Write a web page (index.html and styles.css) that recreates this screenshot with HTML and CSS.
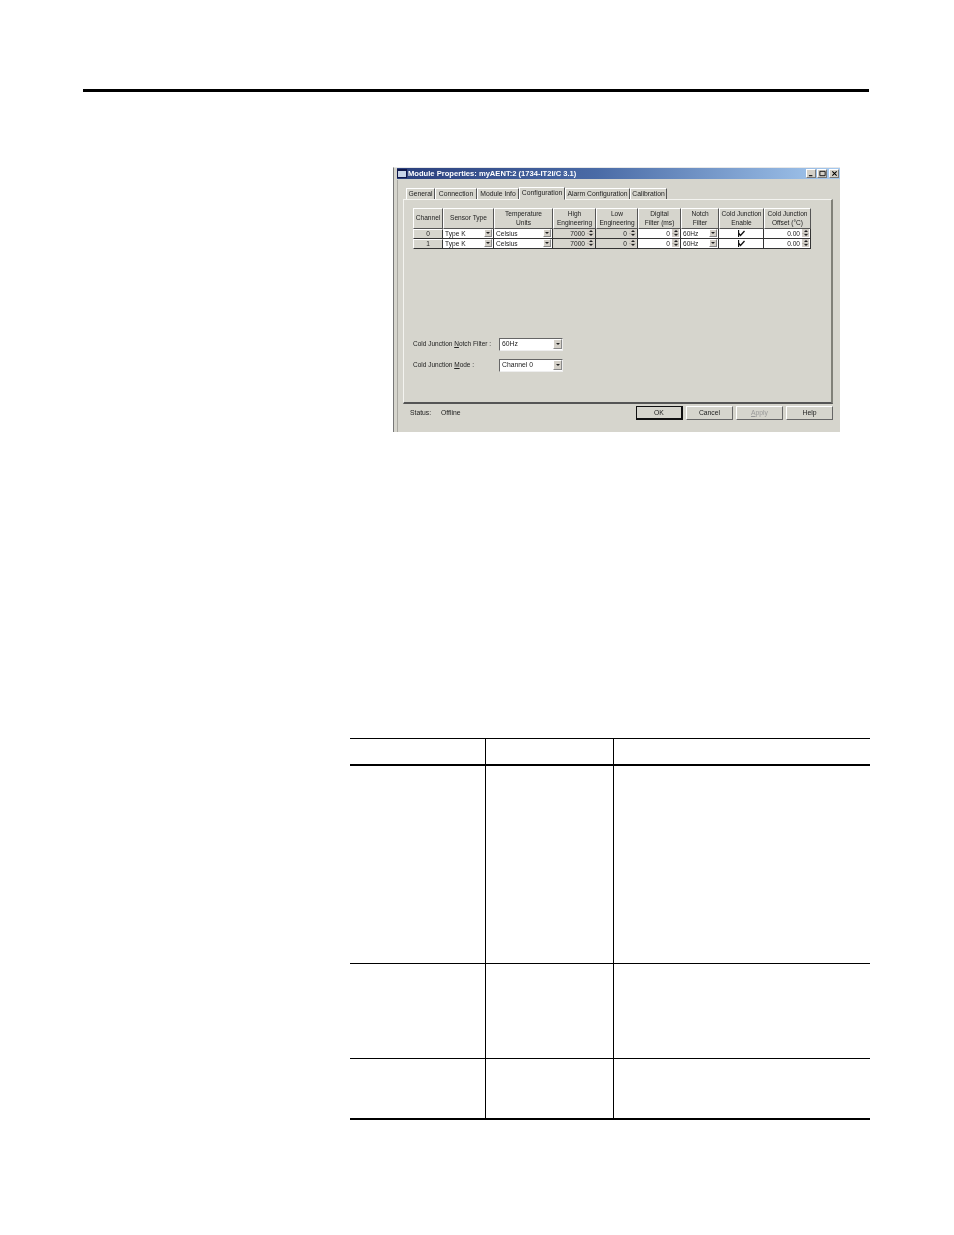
FILE: index.html
```html
<!DOCTYPE html>
<html lang="en">
<head>
<meta charset="utf-8">
<title>Module Properties</title>
<link rel="stylesheet" href="styles.css">
</head>
<body>
<div class="page">
  <div class="top-rule"></div>
  <section class="dialog">
    <header class="titlebar">
      <svg class="app-icon" width="10" height="9" viewBox="0 0 10 9"><rect width="10" height="9" fill="#10184a"/><rect x="1" y="2" width="8" height="6" fill="#c8d4e8"/></svg>
      <span class="title">Module Properties: myAENT:2 (1734-IT2I/C 3.1)</span>
      <div class="win-btns">
        <span class="win-btn"><svg width="8" height="8" viewBox="0 0 8 8"><path d="M1 6.5h4" stroke="#000" stroke-width="1.2"/></svg></span>
        <span class="win-btn"><svg width="8" height="8" viewBox="0 0 8 8"><path d="M1 1.5h6v5h-6z" fill="none" stroke="#000"/></svg></span>
        <span class="win-btn close"><svg width="8" height="8" viewBox="0 0 8 8"><path d="M1.5 1.5l5 5M6.5 1.5l-5 5" stroke="#000" stroke-width="1.2"/></svg></span>
      </div>
    </header>
    <nav class="tabs">
      <span class="tab t1">General</span>
      <span class="tab t2">Connection</span>
      <span class="tab t3">Module Info</span>
      <span class="tab active t4">Configuration</span>
      <span class="tab t5">Alarm Configuration</span>
      <span class="tab t6">Calibration</span>
    </nav>
    <div class="panel">
      <div class="grid">
        <div class="th">Channel</div>
        <div class="th">Sensor Type</div>
        <div class="th">Temperature<br>Units</div>
        <div class="th">High<br>Engineering</div>
        <div class="th">Low<br>Engineering</div>
        <div class="th">Digital<br>Filter (ms)</div>
        <div class="th">Notch<br>Filter</div>
        <div class="th">Cold Junction<br>Enable</div>
        <div class="th">Cold Junction<br>Offset (°C)</div>

        <div class="td head">0</div>
        <div class="td sel"><span>Type K</span><i class="drop"></i></div>
        <div class="td sel"><span>Celsius</span><i class="drop"></i></div>
        <div class="td num gray"><span>7000</span><i class="spin"></i></div>
        <div class="td num gray"><span>0</span><i class="spin"></i></div>
        <div class="td num"><span>0</span><i class="spin"></i></div>
        <div class="td sel"><span>60Hz</span><i class="drop"></i></div>
        <div class="td chk"><svg width="7" height="7" viewBox="0 0 7 7"><path d="M.5 0v7M.5 3l2 2.5L6.5 1" fill="none" stroke="#111" stroke-width="1.3"/></svg></div>
        <div class="td num"><span>0.00</span><i class="spin"></i></div>

        <div class="td head">1</div>
        <div class="td sel"><span>Type K</span><i class="drop"></i></div>
        <div class="td sel"><span>Celsius</span><i class="drop"></i></div>
        <div class="td num gray"><span>7000</span><i class="spin"></i></div>
        <div class="td num gray"><span>0</span><i class="spin"></i></div>
        <div class="td num"><span>0</span><i class="spin"></i></div>
        <div class="td sel"><span>60Hz</span><i class="drop"></i></div>
        <div class="td chk"><svg width="7" height="7" viewBox="0 0 7 7"><path d="M.5 0v7M.5 3l2 2.5L6.5 1" fill="none" stroke="#111" stroke-width="1.3"/></svg></div>
        <div class="td num"><span>0.00</span><i class="spin"></i></div>
      </div>
      <div class="field field-a">
        <label>Cold Junction <u>N</u>otch Filter :</label>
        <div class="combo"><span>60Hz</span><i class="drop big"></i></div>
      </div>
      <div class="field field-b">
        <label>Cold Junction <u>M</u>ode :</label>
        <div class="combo"><span>Channel 0</span><i class="drop big"></i></div>
      </div>
    </div>
    <footer class="footer">
      <span class="status">Status:</span>
      <span class="offline">Offline</span>
      <div class="buttons">
        <button class="btn default">OK</button>
        <button class="btn">Cancel</button>
        <button class="btn disabled"><u>A</u>pply</button>
        <button class="btn">Help</button>
      </div>
    </footer>
  </section>
  <section class="doc-table">
    <div class="row head-row"><div></div><div></div><div></div></div>
    <div class="row r1"><div></div><div></div><div></div></div>
    <div class="row r2"><div></div><div></div><div></div></div>
    <div class="row r3"><div></div><div></div><div></div></div>
  </section>
</div>
</body>
</html>
```
FILE: styles.css
```css
* { box-sizing: border-box; }
html, body { margin: 0; background: #fff; }
body { width: 954px; height: 1235px; overflow: hidden; font-family: "Liberation Sans", Arial, sans-serif; }
.page { padding-top: 89px; }
.top-rule { margin-left: 83px; width: 786px; height: 3px; background: #000; }

.dialog { margin: 75px 0 0 393px; width: 447px; height: 265px; background: #d6d5cd; border-left: 1px solid #777; font-size: 6.8px; color: #222; display: flex; flex-direction: column; border-top: 1px solid #e8e8e8; position: relative; filter: blur(.3px); }
.dialog::before { content: ""; position: absolute; left: 3px; top: 12px; bottom: 0; width: 1px; background: #aaa9a2; }
.titlebar { height: 11px; margin: 0 0 0 3px; background: linear-gradient(90deg, #2b3f7c 0%, #4a6ba6 45%, #a6caf0 100%); display: flex; align-items: center; color: #fff; font-weight: bold; font-size: 7.6px; white-space: nowrap; }
.app-icon { margin-right: 1px; }
.title { flex: 1; color: #fff; }
.win-btns { display: flex; gap: 0; margin-right: 1px; }
.win-btn { width: 10px; height: 9px; background: #d4d0c8; border: 1px solid #777; border-left-color: #fff; border-top-color: #fff; display: flex; align-items: center; justify-content: center; margin-left: 1px; }
.win-btn svg { width: 7px; height: 7px; }
.close { margin-left: 2px; }

.tabs { display: flex; margin: 7px 0 0 12px; height: 13px; align-items: flex-end; }
.tab { height: 11px; line-height: 10px; text-align: center; border-right: 1px solid #555; border-top: 1px solid #fff; border-left: 1px solid #fff; white-space: nowrap; }
.tab.active { height: 13px; line-height: 10px; border-bottom: 1px solid #d6d5cd; margin-bottom: -1px; position: relative; z-index: 1; background: #d6d5cd; }
.t1 { width: 29px; } .t2 { width: 42px; } .t3 { width: 42px; } .t4 { width: 46px; } .t5 { width: 65px; } .t6 { width: 37px; }

.panel { margin-left: 9px; width: 430px; height: 205px; border-top: 1px solid #f4f4f0; border-left: 1px solid #f4f4f0; border-right: 2px solid #808078; border-bottom: 2px solid #555; padding: 8px 0 0 9px; }
.grid { display: grid; width: 398px; grid-template-columns: 30px 51px 59px 43px 42px 43px 38px 45px 47px; grid-template-rows: 21px 10px 10px; }
.th { background: #d6d5cd; border: 1px solid #555; border-top-color: #fff; border-left-color: #fff; display: flex; align-items: center; justify-content: center; text-align: center; line-height: 9px; font-size: 6.6px; padding-bottom: 2px; }
.td { display: flex; align-items: center; height: 10px; background: #fff; border-right: 1px solid #333; border-bottom: 1px solid #333; font-size: 6.6px; position: relative; padding: 0 0 1px 2px; }
.td.head { background: #d6d5cd; justify-content: center; border-top: 1px solid #fff; border-left: 1px solid #fff; padding: 0 0 1px; }
.td.gray { background: #d6d5cd; }
.td.num { justify-content: flex-end; padding-right: 10px; }
.td.chk { justify-content: center; padding: 0; }
.td.sel span { flex: 1; }
.drop { position: absolute; right: 1px; top: 0; width: 8px; height: 8px; background: #d4d0c8; border: 1px solid #888; border-top-color: #fff; border-left-color: #fff; }
.drop::after { content: ""; position: absolute; left: 1px; top: 2px; border: 2px solid transparent; border-top: 2px solid #222; border-bottom: 0; }
.spin { position: absolute; right: 1px; top: 0; width: 7px; height: 8px; background: linear-gradient(#bbb8b0, #bbb8b0) center / 100% 1px no-repeat, #d4d0c8; }
.spin::before { content: ""; position: absolute; left: 1.5px; top: 1px; border: 2px solid transparent; border-bottom: 2px solid #222; border-top: 0; }
.spin::after { content: ""; position: absolute; left: 1.5px; bottom: 1px; border: 2px solid transparent; border-top: 2px solid #222; border-bottom: 0; }

.field { display: flex; align-items: center; height: 12px; }
.field-a { margin-top: 89px; }
.field-b { margin-top: 9px; }
.field label { width: 86px; white-space: nowrap; font-size: 6.5px; padding-bottom: 1px; }
.combo { width: 64px; height: 13px; background: #fff; border: 1px solid #666; border-right-color: #eee; border-bottom-color: #eee; position: relative; padding-left: 2px; line-height: 10px; }
.drop.big { width: 9px; height: 10px; top: 0; right: 0; }
.drop.big::after { left: 2px; top: 3px; }

.footer { display: flex; align-items: flex-start; padding: 2px 7px 0 16px; }
.status { width: 31px; margin-top: 3px; }
.offline { margin-top: 3px; flex: 1; }
.buttons { display: flex; gap: 3px; }
.btn { width: 47px; height: 14px; padding: 0 0 1px; background: #d6d5cd; border: 1px solid #666; border-top-color: #fff; border-left-color: #fff; font: 6.8px "Liberation Sans", Arial, sans-serif; color: #222; }
.btn.default { border: 1px solid #111; border-right-width: 2px; border-bottom-width: 2px; }
.btn.disabled { color: #999; }

.doc-table { margin: 306px 0 0 350px; width: 520px; border-top: 1px solid #000; }
.row { display: grid; grid-template-columns: 135px 128px 257px; }
.row div + div { border-left: 1px solid #000; }
.head-row { height: 27px; border-bottom: 2px solid #000; }
.r1 { height: 198px; border-bottom: 1px solid #000; }
.r2 { height: 95px; border-bottom: 1px solid #000; }
.r3 { height: 61px; border-bottom: 2px solid #000; }
```
